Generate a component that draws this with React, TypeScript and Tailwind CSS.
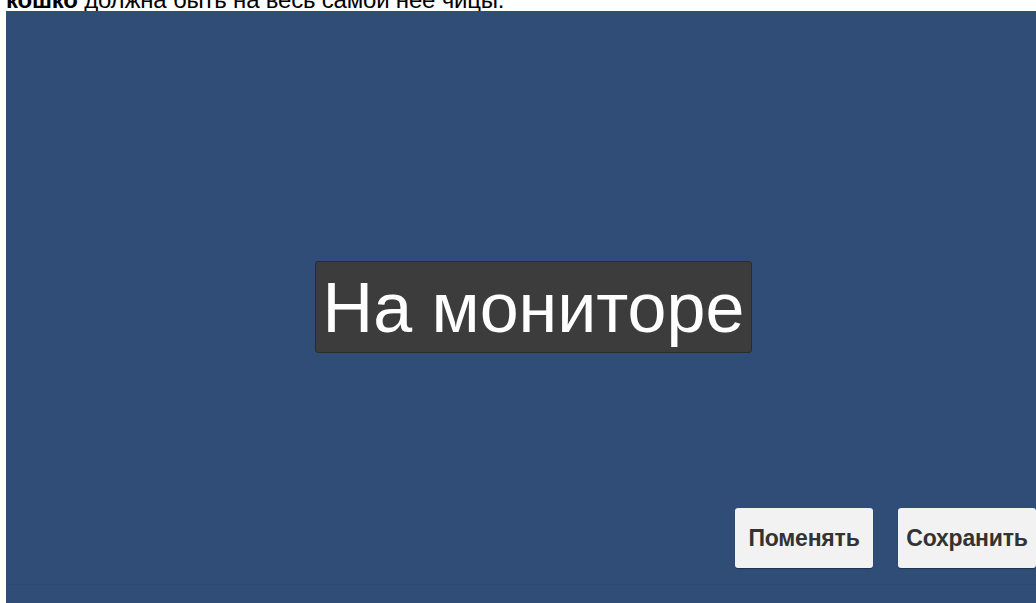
const sans = { fontFamily: '"Liberation Sans", Arial, sans-serif' }

function ActionButton({ label }: { label: string }) {
  return (
    <button
      className="h-[60px] w-[138px] rounded-[3px] bg-[#f2f2f2] text-[23px] font-bold tracking-[-0.2px] text-[#333333] shadow-[0_1px_1px_rgba(0,0,0,0.35)]"
      style={sans}
    >
      {label}
    </button>
  )
}

export default function App() {
  return (
    <div className="h-[603px] w-[1036px] overflow-hidden bg-white" style={sans}>
      {/* caption line above the preview, scrolled partly out of view */}
      <div className="h-[11px] overflow-hidden pl-[6px]">
        <p className="-mt-[12px] whitespace-nowrap text-[24px] leading-[24px] tracking-[-0.2px] text-black">
          <b>кошко</b> должна быть на весь самой нее чицы.
        </p>
      </div>

      <div className="flex">
        <div className="w-[6px] shrink-0" />
        <div className="grid h-[592px] w-[1055px] shrink-0 bg-[#2f4d77]">
          <div className="[grid-area:1/1] place-self-center">
            <div className="flex h-[92px] w-[437px] items-center justify-center rounded-[3px] border border-[#2b2b2b] bg-[#3c3c3c]">
              <span className="mt-[2px] text-[70px] leading-none text-white">На мониторе</span>
            </div>
          </div>

          <div className="[grid-area:1/1] mb-[18px] h-px self-end bg-[#2c4a73]" />

          <div className="[grid-area:1/1] mb-[35px] mr-[25px] flex gap-[25px] self-end justify-self-end">
            <ActionButton label="Поменять" />
            <ActionButton label="Сохранить" />
          </div>
        </div>
      </div>
    </div>
  )
}
